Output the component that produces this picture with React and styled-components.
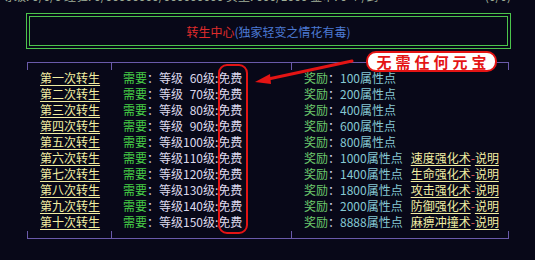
import React from "react"
import styled, { createGlobalStyle } from "styled-components"

const GlobalStyle = createGlobalStyle`
  html, body {
    margin: 0;
    padding: 0;
    background: #080818;
  }
  body {
    font-family: "Noto Sans CJK SC", "Liberation Sans", sans-serif;
    font-size: 12px;
  }
`

const purple = "#6a5aaa"
const tick = `linear-gradient(${purple}, ${purple})`

const Page = styled.div`
  position: relative;
  width: 535px;
  height: 260px;
  overflow: hidden;
  background: #080818;
`

const StatusLine = styled.div`
  height: 5px;
  overflow: hidden;
  display: flex;
  justify-content: space-between;
  padding: 0 24px 0 2px;
  color: #a0b098;
`

const StatusText = styled.span`
  margin-top: -10px;
  line-height: 12px;
  white-space: nowrap;
`

const Banner = styled.div`
  margin: 8px 0 0 26px;
  width: 485px;
  box-sizing: border-box;
  border: 1px solid #4cc44c;
  padding: 2px;
`

const BannerInner = styled.div`
  height: 28px;
  border: 1px solid #4cc44c;
  display: flex;
  align-items: center;
  justify-content: center;
  font-size: 12px;
`

const TitleRed = styled.span`
  color: #e02c2c;
`

const TitleBlue = styled.span`
  color: #4c7ad4;
`

const Frame = styled.div`
  margin: 13px 0 0 27px;
  width: 482px;
  box-sizing: border-box;
  border-top: 1px solid ${purple};
  border-bottom: 1px solid ${purple};
  display: grid;
  grid-template-columns: 84px 180px 1fr;
  background: ${tick} right top / 1px 7px no-repeat,
    ${tick} right bottom / 1px 7px no-repeat;
`

const Column = styled.div`
  padding: 7px 0 8px ${(p) => p.$indent}px;
  background: ${tick} left top / 1px 7px no-repeat,
    ${tick} left bottom / 1px 7px no-repeat;
`

const Row = styled.div`
  height: 16px;
  line-height: 16px;
  white-space: nowrap;
  display: flex;
  align-items: center;
`

const Link = styled.a`
  color: #f2eea2;
  text-decoration: underline;
  text-underline-offset: 2px;
  cursor: pointer;
`

const Label = styled.span`
  color: ${(p) => p.$tone};
`

const Plain = styled.span`
  color: #dcd8ec;
`

const Reward = styled.span`
  color: #86c8d4;
`

const Skill = styled.span`
  margin-left: 8px;
  display: inline-flex;
`

const Dash = styled.span`
  color: #e05a5a;
`

const Ring = styled.div`
  position: absolute;
  left: 218px;
  top: 64px;
  width: 30px;
  height: 170px;
  box-sizing: border-box;
  border: 2px solid #e41414;
  border-radius: 9px;
`

const Tag = styled.div`
  position: absolute;
  left: 366px;
  top: 51px;
  width: 131px;
  height: 21px;
  box-sizing: border-box;
  border: 2px solid #e41414;
  border-radius: 10px;
  background: #fff;
  display: flex;
  align-items: center;
  justify-content: center;
  white-space: nowrap;
  color: #e41414;
  font-size: 15px;
  line-height: 17px;
  font-weight: 700;
  letter-spacing: 4px;
  padding-left: 4px;
`

const Arrow = styled.svg`
  position: absolute;
  left: 0;
  top: 0;
  pointer-events: none;
`

const ranks = ["一", "二", "三", "四", "五", "六", "七", "八", "九", "十"]
const rewards = ["100", "200", "400", "600", "800", "1000", "1400", "1800", "2000", "8888"]
const skills = [null, null, null, null, null, "速度强化术", "生命强化术", "攻击强化术", "防御强化术", "麻痹冲撞术"]

const level = (i) => {
  const n = String(60 + i * 10)
  return n.length < 3 ? "\u2007" + n : n
}

export default function App() {
  return (
    <Page>
      <GlobalStyle />
      <StatusLine>
        <StatusText>等级: 0/0/0 经验: 0/00000000/000000000 负重: 000/1000 金币: 0 个/剑</StatusText>
        <StatusText>(0/0)</StatusText>
      </StatusLine>

      <Banner>
        <BannerInner>
          <TitleRed>转生中心</TitleRed>
          <TitleBlue>(独家轻变之情花有毒)</TitleBlue>
        </BannerInner>
      </Banner>

      <Frame>
        <Column $indent={13}>
          {ranks.map((r) => (
            <Row key={r}>
              <Link>第{r}次转生</Link>
            </Row>
          ))}
        </Column>
        <Column $indent={12}>
          {ranks.map((r, i) => (
            <Row key={r}>
              <Label $tone="#46cc46">需要</Label>
              <Plain>：等级{level(i)}级:免费</Plain>
            </Row>
          ))}
        </Column>
        <Column $indent={13}>
          {ranks.map((r, i) => (
            <Row key={r}>
              <Label $tone="#6cc86c">奖励</Label>
              <Plain>：</Plain>
              <Reward>{rewards[i]}属性点</Reward>
              {skills[i] && (
                <Skill>
                  <Link>{skills[i]}</Link>
                  <Dash>-</Dash>
                  <Link>说明</Link>
                </Skill>
              )}
            </Row>
          ))}
        </Column>
      </Frame>

      <Ring />
      <Arrow width="535" height="260" viewBox="0 0 535 260">
        <line x1="352" y1="61" x2="266" y2="79.5" stroke="#e41414" strokeWidth="3" strokeLinecap="round" />
        <polygon points="255,82 270,74 271,84" fill="#e41414" />
      </Arrow>
      <Tag>无需任何元宝</Tag>
    </Page>
  )
}
